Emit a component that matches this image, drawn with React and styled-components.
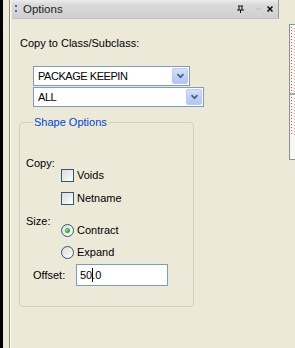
import React from "react";
import styled, { createGlobalStyle } from "styled-components";

const Global = createGlobalStyle`
  html, body { margin: 0; padding: 0; }
  body {
    width: 295px; height: 348px; overflow: hidden;
    background: #ece9d8;
    font-family: "Liberation Sans", Arial, sans-serif;
    font-size: 11px; line-height: 13px; color: #000;
  }
`;

const Screen = styled.div`
  display: flex;
  width: 295px;
  height: 348px;
  background: #ece9d8;
`;

const BlackStrip = styled.div`
  width: 3px;
  background: #000;
  flex: none;
`;

const Frame = styled.div`
  margin-left: 6px;
  width: 1px;
  background: #8b8a78;
  border-right: 1px solid #faf9f2;
  flex: none;
`;

const Panel = styled.div`
  width: 268px;
  flex: none;
  display: flex;
  flex-direction: column;
`;

const TitleBar = styled.div`
  margin-left: 1px;
  height: 18px;
  display: flex;
  align-items: center;
  background: linear-gradient(to bottom, #ececec 0%, #dadada 25%, #cfcfcf 100%);
  border-bottom: 1px solid #c2c2c2;
  border-right: 1px solid #9a9a9a;
  padding: 0 4px 0 2px;
  box-sizing: content-box;
`;

const Grip = styled.svg`
  width: 4px;
  height: 10px;
  flex: none;
`;

const TitleText = styled.span`
  margin-left: 5px;
  color: #222;
  font-size: 11.5px;
  flex: 1;
`;

const TitleIcon = styled.svg`
  margin-left: ${p => p.$ml || 0}px;
  flex: none;
`;

const Content = styled.div`
  padding: 18px 0 0 9px;
  display: flex;
  flex-direction: column;
`;

const Caption = styled.div`
  height: 13px;
`;

const Combos = styled.div`
  margin: 16px 0 0 13px;
  display: flex;
  flex-direction: column;
  gap: 1px;
`;

const Combo = styled.div`
  width: ${p => p.$w}px;
  height: 20px;
  box-sizing: border-box;
  border: 1px solid #7f9db9;
  background: #fff;
  display: flex;
  align-items: center;
  padding: 1px;
`;

const ComboText = styled.span`
  flex: 1;
  padding-left: 3px;
  white-space: nowrap;
  letter-spacing: -0.45px;
`;

const ComboButton = styled.div`
  width: 16px;
  height: 16px;
  box-sizing: border-box;
  border: 1px solid #bccbee;
  border-radius: 2px;
  background: linear-gradient(to bottom, #d4dffb 0%, #bccff8 60%, #b2c6f5 100%);
  display: flex;
  align-items: center;
  justify-content: center;
`;

const Group = styled.fieldset`
  margin: 9px 0 0 -1px;
  width: 175px;
  box-sizing: border-box;
  border: 1px solid #d0d0bf;
  border-radius: 4px;
  padding: 28px 0 20px 6px;
  min-width: 0;
`;

const Legend = styled.legend`
  color: #0046d5;
  padding: 0 1px;
  margin-left: 7px;
  line-height: 13px;
`;

const Section = styled.div`
  display: grid;
  grid-template-columns: 35px auto;
  margin-top: ${p => p.$mt || 0}px;
`;

const SectionLabel = styled.div`
  align-self: start;
`;

const Options = styled.div`
  padding-top: ${p => p.$pt}px;
  display: flex;
  flex-direction: column;
  gap: ${p => p.$gap}px;
`;

const Option = styled.label`
  display: flex;
  align-items: center;
  height: 15px;
  gap: 3px;
`;

const CheckBox = styled.span`
  width: 13px;
  height: 13px;
  box-sizing: border-box;
  border: 1px solid #2c5a84;
  background: linear-gradient(135deg, #dcdcd7 0%, #f0f0ea 60%, #ffffff 100%);
  flex: none;
`;

const Radio = styled.span`
  width: 13px;
  height: 13px;
  box-sizing: border-box;
  border-radius: 50%;
  border: 1px solid #2c5a84;
  background: linear-gradient(135deg, #dcdcd7 0%, #f0f0ea 60%, #ffffff 100%);
  flex: none;
  display: flex;
  align-items: center;
  justify-content: center;
  &::after {
    content: "";
    display: ${p => (p.$checked ? "block" : "none")};
    width: 5px;
    height: 5px;
    border-radius: 50%;
    background: radial-gradient(circle at 40% 40%, #8fe08f 0%, #2aa52a 60%, #1e8a1e 100%);
  }
`;

const OffsetRow = styled.div`
  margin: 4px 0 0 7px;
  display: flex;
  align-items: center;
`;

const OffsetLabel = styled.span`
  width: 43px;
`;

const TextInput = styled.div`
  width: 92px;
  height: 22px;
  box-sizing: border-box;
  border: 1px solid #7f9db9;
  background: #fff;
  display: flex;
  align-items: center;
  padding-left: 3px;
`;

const Caret = styled.span`
  display: inline-block;
  width: 1px;
  height: 14px;
  background: #000;
  margin: 0 -1px 0 0;
`;

const RightCol = styled.div`
  flex: 1;
  padding: 24px 0 0 10px;
  overflow: hidden;
`;

const SideBox = styled.div`
  width: 10px;
  height: 136px;
  box-sizing: border-box;
  border: 1px solid #8f8f8f;
  background: #f7f7f4;
  display: flex;
  flex-direction: column;
`;

const SideCell = styled.div`
  height: ${p => p.$h}px;
  border-bottom: ${p => (p.$div ? "2px solid #a8a8a8" : "none")};
  background:
    repeating-linear-gradient(to bottom, #d04a6a 0 1px, transparent 1px 3px) 1px 2px / 1px 100% no-repeat,
    repeating-linear-gradient(to bottom, #e59aae 0 1px, transparent 1px 3px) 4px 3px / 1px 100% no-repeat;
`;

const Chevron = () => (
  <svg width="9" height="6" viewBox="0 0 9 6">
    <path d="M1.5 1.2L4.5 4.2L7.5 1.2" stroke="#4d6185" strokeWidth="1.8" fill="none" />
  </svg>
);

export default function App() {
  return (
    <>
      <Global />
      <Screen>
        <BlackStrip />
        <Frame />
        <Panel>
          <TitleBar>
            <Grip viewBox="0 0 4 10">
              <rect x="1" y="1" width="2" height="2" fill="#3a6fd0" />
              <rect x="1" y="6" width="2" height="2" fill="#3a6fd0" />
            </Grip>
            <TitleText>Options</TitleText>
            <TitleIcon width="11" height="10" viewBox="0 0 11 10">
              <path d="M3 2h5M4 2v4M7 2v4M2 6h7M5.5 6v3" stroke="#111" strokeWidth="1" fill="none" />
            </TitleIcon>
            <TitleIcon $ml={8} width="9" height="10" viewBox="0 0 9 10">
              <path d="M2 5h5" stroke="#bdbdbd" strokeWidth="1" />
            </TitleIcon>
            <TitleIcon $ml={3} width="8" height="10" viewBox="0 0 8 10">
              <path d="M1.5 2.5l5 5M6.5 2.5l-5 5" stroke="#111" strokeWidth="1.6" />
            </TitleIcon>
          </TitleBar>
          <Content>
            <Caption>Copy to Class/Subclass:</Caption>
            <Combos>
              <Combo $w={157}>
                <ComboText>PACKAGE KEEPIN</ComboText>
                <ComboButton><Chevron /></ComboButton>
              </Combo>
              <Combo $w={171}>
                <ComboText>ALL</ComboText>
                <ComboButton><Chevron /></ComboButton>
              </Combo>
            </Combos>
            <Group>
              <Legend>Shape Options</Legend>
              <Section>
                <SectionLabel>Copy:</SectionLabel>
                <Options $pt={11} $gap={8}>
                  <Option><CheckBox />Voids</Option>
                  <Option><CheckBox />Netname</Option>
                </Options>
              </Section>
              <Section $mt={9}>
                <SectionLabel>Size:</SectionLabel>
                <Options $pt={8} $gap={7}>
                  <Option><Radio $checked />Contract</Option>
                  <Option><Radio />Expand</Option>
                </Options>
              </Section>
              <OffsetRow>
                <OffsetLabel>Offset:</OffsetLabel>
                <TextInput>50<Caret />.0</TextInput>
              </OffsetRow>
            </Group>
          </Content>
        </Panel>
        <RightCol>
          <SideBox>
            <SideCell $h={68} $div />
            <SideCell $h={40} />
          </SideBox>
        </RightCol>
      </Screen>
    </>
  );
}
